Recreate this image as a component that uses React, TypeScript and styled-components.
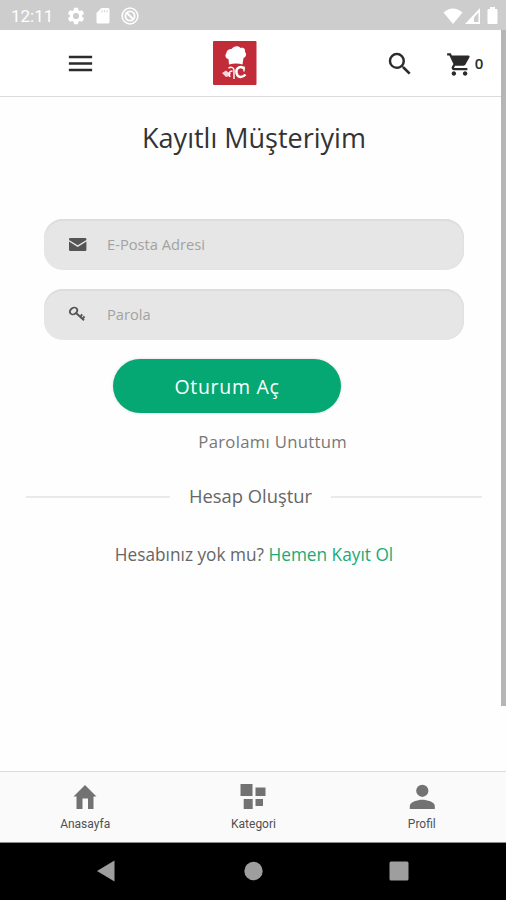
import React from "react";
import styled, { createGlobalStyle } from "styled-components";

const GlobalStyle = createGlobalStyle`
  * { box-sizing: border-box; }
  body { margin: 0; background: #fff; }
  svg { display: block; flex: none; }
`;

const Screen = styled.div`
  position: relative;
  width: 506px;
  height: 900px;
  display: flex;
  flex-direction: column;
  background: #fefefe;
  overflow: hidden;
  font-family: "Open Sans", "Noto Sans", sans-serif;
`;

const StatusBar = styled.header`
  height: 30px;
  display: flex;
  align-items: center;
  padding: 1px 8px 0 11px;
  background: #cdcdcd;
  color: #fff;
`;

const Clock = styled.span`
  width: 56px;
  font: 400 17px/20px Roboto, sans-serif;
  padding-top: 1px;
`;

const StatusGroup = styled.div<{ $gap: number; $end?: boolean }>`
  display: flex;
  align-items: center;
  gap: ${(p) => p.$gap}px;
  margin-left: ${(p) => (p.$end ? "auto" : "0")};
`;

const Toolbar = styled.div`
  height: 67px;
  display: flex;
  align-items: center;
  padding: 0 22px 0 65px;
  border-bottom: 1px solid #dcdcdc;
  background: #fff;
  color: #2b2b2b;
`;

const Logo = styled.div`
  margin-left: 117px;
`;

const Actions = styled.div`
  display: flex;
  align-items: center;
  margin-left: auto;
  padding-top: 2px;
`;

const Cart = styled.button`
  display: flex;
  align-items: center;
  gap: 1px;
  margin-left: 31px;
  padding: 0;
  border: 0;
  background: none;
  color: inherit;
`;

const CartCount = styled.span`
  width: 10px;
  padding-bottom: 3px;
  font: 600 15px/18px "Open Sans", sans-serif;
`;

const Scrollbar = styled.div`
  position: absolute;
  right: 0;
  top: 30px;
  width: 5px;
  height: 676px;
  background: #b5b5b5;
`;

const Main = styled.main`
  flex: 1;
  display: flex;
  flex-direction: column;
`;

const Title = styled.h1`
  margin: 21px 0 62px;
  padding-left: 2px;
  text-align: center;
  font-size: 27px;
  font-weight: 400;
  line-height: 39px;
  color: #333;
`;

const Form = styled.form`
  display: flex;
  flex-direction: column;
  gap: 19px;
  padding: 0 42px 0 44px;
`;

const Field = styled.label`
  height: 51px;
  display: flex;
  align-items: center;
  gap: 19px;
  padding: 0 0 1px 24px;
  border-radius: 19px;
  background: #e6e6e6;
  box-shadow: inset 0 2px 1px #dddddd, inset -1px 0 1px #e0e0e0;
  color: #555;
`;

const Placeholder = styled.span`
  font-size: 14.7px;
  line-height: 20px;
  color: #a2a2a2;
`;

const Submit = styled.button`
  width: 228px;
  height: 54px;
  margin-left: 69px;
  padding: 2px 0 0;
  border: 0;
  border-radius: 27px;
  background: #05a872;
  box-shadow: 0 0 3px rgba(0, 0, 0, 0.16);
  color: #fff;
  font: 400 19.5px/26px "Open Sans", sans-serif;
  letter-spacing: 0.7px;
`;

const Forgot = styled.a`
  margin: 17px 159px 0 0;
  text-align: right;
  font-size: 16.7px;
  letter-spacing: 0.3px;
  line-height: 24px;
  color: #777;
`;

const Divider = styled.div`
  display: flex;
  align-items: center;
  gap: 19px;
  margin: 29px 24px 0 26px;
  height: 28px;
  color: #666;
  font-size: 18.35px;
  line-height: 28px;
  white-space: nowrap;
  &::before,
  &::after {
    content: "";
    height: 2px;
    background: #e9e9e9;
  }
  &::before { width: 144px; }
  &::after { flex: 1; }
`;

const DividerLabel = styled.span`
  padding-bottom: 2px;
`;

const Register = styled.p`
  margin: 31px 0 0;
  padding-left: 2px;
  text-align: center;
  font-size: 17.25px;
  line-height: 26px;
  color: #666;
`;

const RegisterLink = styled.a`
  color: #18aa78;
`;

const Tabs = styled.nav`
  height: 72px;
  display: grid;
  grid-template-columns: repeat(3, 1fr);
  padding-left: 1px;
  border-top: 1px solid #dcdcdc;
  border-bottom: 1px solid #8c8c8c;
  background: #fafafa;
`;

const Tab = styled.a`
  display: flex;
  flex-direction: column;
  align-items: center;
  padding-top: 12px;
  gap: 5px;
  color: #727272;
`;

const TabLabel = styled.span`
  font: 400 12px/18px Roboto, sans-serif;
  color: #505050;
`;

const SystemNav = styled.footer`
  height: 57px;
  display: flex;
  align-items: center;
  justify-content: space-between;
  padding: 0 97px 1px 96px;
  background: #000;
  color: #9e9e9e;
`;

type IconProps = { w: number; h: number; box?: string; children: React.ReactNode };

const Icon = ({ w, h, box = "0 0 24 24", children }: IconProps) => (
  <svg width={w} height={h} viewBox={box} fill="currentColor">
    {children}
  </svg>
);

const ChefLogo = () => (
  <svg width="44" height="44" viewBox="0 0 44 44">
    <rect width="43.5" height="44" rx="1" fill="#c22b38" />
    <path
      d="M16 23.5l-.5-5.500c-3-.5-4-4-2-6 0-3 3-4 5-4 2-3 7-4 9-1 4-1 5 2 4.500 4 2 2 1 5-1.500 6l-1 6.500c-4-1.500-9-1.500-13.500 0z"
      fill="#fff"
    />
    <path d="M31.500 28c-4-4-9-1-8 4 1 5 6 5 9 1.500" fill="none" stroke="#fff" strokeWidth="2.4" />
    <path d="M31 25.500v5M15.500 27c3-1.500 5.500-.5 5.500 2.500v8.500M19.500 30c-3 0-4.500 2-2.500 6" fill="none" stroke="#fff" strokeWidth="1.4" />
    <path d="M9 32l4-2.500 2.500 2 2.500.500-1.500 3-3.500 1z" fill="#fff" opacity=".8" />
  </svg>
);

const fields = [
  {
    label: "E-Posta Adresi",
    icon: (
      <Icon w={20} h={20} box="0 0 20 20">
        <path d="M1 5.200Q1 4 2.200 4H17.200Q18.400 4 18.400 5.200V6L9.700 11.200 1 6zM1 7.400L9.700 13 18.400 7.400V16Q18.400 17 17.200 17H2.200Q1 17 1 16z" />
      </Icon>
    ),
  },
  {
    label: "Parola",
    icon: (
      <Icon w={20} h={20} box="0 0 20 20">
        <g fill="none" stroke="currentColor" strokeWidth="1.9">
          <ellipse cx="5.6" cy="7" rx="4" ry="3.1" transform="rotate(-35 5.6 7)" />
          <path d="M8 9l8 7.300M12.200 12.800l2-2.500M14.500 14.800l2-2.400" />
        </g>
      </Icon>
    ),
  },
];

const tabs = [
  {
    label: "Anasayfa",
    icon: (
      <Icon w={26} h={26} box="0 0 26 26">
        <path d="M13 1L24.500 12.500H21.500V25H16V14.500H10.500V25H4.500V12.500H1.500z" />
      </Icon>
    ),
  },
  {
    label: "Kategori",
    icon: (
      <Icon w={26} h={26} box="0 0 26 26">
        <path d="M.5 0h12v12h-12zM15.500 3.500h10V12h-10zM3.700 15h9v10h-9zM15.500 15H23v7h-7.500z" />
      </Icon>
    ),
  },
  {
    label: "Profil",
    icon: (
      <Icon w={26} h={26} box="0 0 26 26">
        <circle cx="13.3" cy="6.8" r="6.1" />
        <path d="M.8 25v-3c0-4 8-6.200 12.500-6.200S25.800 18 25.800 22v3z" />
      </Icon>
    ),
  },
];

export default function App() {
  return (
    <Screen>
      <GlobalStyle />
      <StatusBar>
        <Clock>12:11</Clock>
        <StatusGroup $gap={10}>
          <Icon w={18} h={18} box="1.5 1.5 21 21">
            <path d="M19.140 12.940c.040-.300.060-.610.060-.940 0-.320-.020-.640-.070-.940l2.030-1.580c.180-.140.230-.410.120-.610l-1.920-3.320c-.120-.220-.370-.290-.590-.220l-2.390.960c-.500-.380-1.030-.700-1.620-.940l-.360-2.540c-.040-.240-.240-.410-.480-.410h-3.840c-.240 0-.430.170-.470.410l-.360 2.540c-.590.240-1.130.570-1.620.940l-2.390-.960c-.220-.080-.470 0-.590.220L2.740 8.870c-.120.210-.080.470.120.610l2.030 1.580c-.050.300-.090.630-.090.940s.020.640.070.940l-2.030 1.580c-.180.140-.230.410-.120.610l1.920 3.320c.120.220.370.290.590.220l2.390-.960c.500.380 1.030.700 1.620.940l.360 2.540c.050.240.240.410.480.410h3.840c.240 0 .440-.170.470-.410l.360-2.540c.590-.240 1.130-.560 1.620-.940l2.390.960c.220.080.470 0 .590-.220l1.920-3.320c.120-.220.070-.470-.120-.610zM12 15.600A3.600 3.600 0 1 1 12 8.400a3.600 3.600 0 0 1 0 7.200z" />
          </Icon>
          <Icon w={16} h={18} box="0 0 16 18">
            <path d="M6.500 1H13q1.500 0 1.500 1.500V15q0 1.500-1.500 1.500H3Q1.500 16.500 1.500 15V6z" />
            <path d="M7 3v2.500M9.500 3v2.500M12 3v2.500" stroke="#cdcdcd" strokeWidth=".8" />
          </Icon>
          <Icon w={18} h={18} box="0 0 18 18">
            <g fill="none" stroke="currentColor">
              <circle cx="9" cy="9" r="7.9" strokeWidth="1.5" />
              <circle cx="9" cy="9" r="4.6" strokeWidth="1.9" />
              <path d="M5.500 5.500l7 7" strokeWidth="1.9" />
            </g>
          </Icon>
        </StatusGroup>
        <StatusGroup $gap={2} $end>
          <Icon w={20} h={16} box="0 0 20 16">
            <path d="M10 16L.5 4.500Q10-3.500 19.500 4.500z" />
          </Icon>
          <Icon w={20} h={16} box="0 0 20 16">
            <path d="M15 0V16H0zM13.500 4.500L9 9.500V14h4.500z" fillRule="evenodd" />
          </Icon>
          <Icon w={11} h={17} box="0 0 11 17">
            <path d="M3 0h5v2h1.500q1 0 1 1v13q0 1-1 1h-8q-1 0-1-1V3q0-1 1-1H3z" />
          </Icon>
        </StatusGroup>
      </StatusBar>

      <Toolbar>
        <Icon w={31} h={31}>
          <path d="M3 18h18v-2H3v2zm0-5h18v-2H3v2zm0-7v2h18V6H3z" />
        </Icon>
        <Logo>
          <ChefLogo />
        </Logo>
        <Actions>
          <Icon w={30} h={30}>
            <path d="M15.500 14h-.790l-.280-.270A6.471 6.471 0 0 0 16 9.500 6.500 6.500 0 1 0 9.500 16c1.610 0 3.090-.590 4.230-1.570l.270.280v.790l5 4.990L20.490 19l-4.990-5zm-6 0C7.010 14 5 11.990 5 9.500S7.010 5 9.500 5 14 7.010 14 9.500 11.990 14 9.500 14z" />
          </Icon>
          <Cart>
            <Icon w={27} h={27}>
              <path d="M5.800 5h13.500l-3.300 6.200H8.800z" />
              <path d="M7 18c-1.100 0-1.990.900-1.990 2S5.900 22 7 22s2-.900 2-2-.900-2-2-2zM1 2v2h2l3.600 7.590-1.350 2.450c-.160.280-.250.610-.250.960 0 1.100.900 2 2 2h12v-2H7.420c-.140 0-.250-.110-.250-.250l.030-.120.900-1.630h7.450c.750 0 1.410-.410 1.750-1.030l3.580-6.490A1.003 1.003 0 0 0 20 4H5.210l-.940-2H1zm16 16c-1.100 0-1.990.900-1.990 2s.890 2 1.990 2 2-.900 2-2-.900-2-2-2z" />
            </Icon>
            <CartCount>0</CartCount>
          </Cart>
        </Actions>
      </Toolbar>

      <Main>
        <Title>Kayıtlı Müşteriyim</Title>
        <Form>
          {fields.map((f) => (
            <Field key={f.label}>
              {f.icon}
              <Placeholder>{f.label}</Placeholder>
            </Field>
          ))}
          <Submit type="button">Oturum Aç</Submit>
        </Form>
        <Forgot>Parolamı Unuttum</Forgot>
        <Divider>
          <DividerLabel>Hesap Oluştur</DividerLabel>
        </Divider>
        <Register>
          Hesabınız yok mu? <RegisterLink>Hemen Kayıt Ol</RegisterLink>
        </Register>
      </Main>

      <Tabs>
        {tabs.map((t) => (
          <Tab key={t.label}>
            {t.icon}
            <TabLabel>{t.label}</TabLabel>
          </Tab>
        ))}
      </Tabs>
      <SystemNav>
        <Icon w={20} h={22} box="0 0 20 22">
          <path d="M18.500.500v21L1 11z" />
        </Icon>
        <Icon w={20} h={20} box="0 0 20 20">
          <circle cx="10.5" cy="10" r="9.2" />
        </Icon>
        <Icon w={20} h={20} box="0 0 20 20">
          <rect x=".5" y=".5" width="19" height="19" rx="1.5" />
        </Icon>
      </SystemNav>
      <Scrollbar />
    </Screen>
  );
}
